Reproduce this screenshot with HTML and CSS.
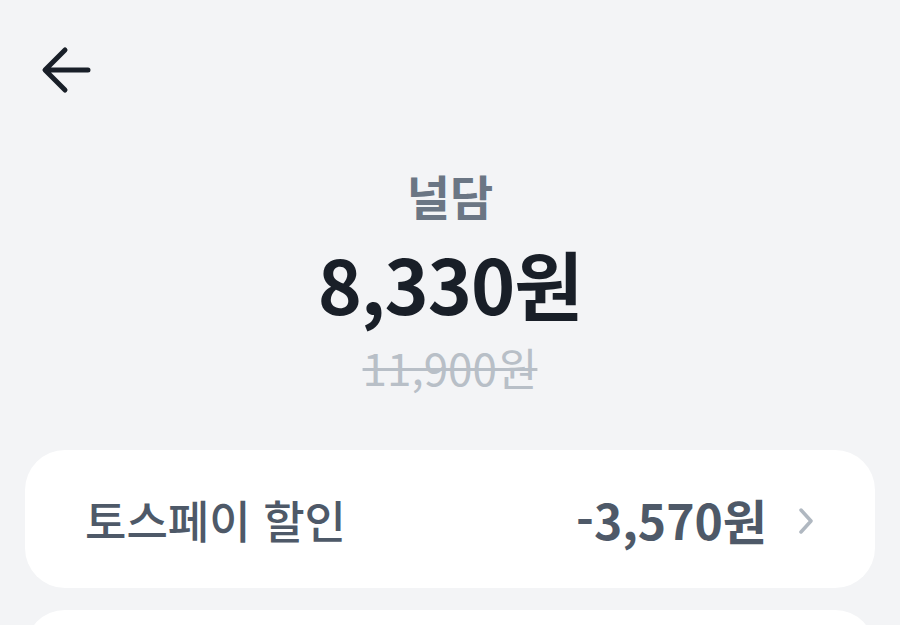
FILE: index.html
```html
<!DOCTYPE html>
<html lang="ko">
<head>
  <meta charset="UTF-8">
  <meta name="viewport" content="width=device-width, initial-scale=1.0">
  <title>결제</title>
  <link rel="stylesheet" href="styles.css">
</head>
<body>

  <div class="page">
    <!-- Top bar with back button -->
    <header class="top-bar">
      <button class="back-button" aria-label="뒤로">
        <svg width="52" height="48" viewBox="0 0 52 48" fill="none">
          <path d="M48 24H6M25 4L5 24L25 44" stroke="#191f28" stroke-width="5" stroke-linecap="round" stroke-linejoin="round"/>
        </svg>
      </button>
    </header>

    <!-- Store name and price summary -->
    <section class="summary">
      <p class="store-name">널담</p>
      <p class="final-price">8,330원</p>
      <p class="original-price">11,900원</p>
    </section>

    <!-- Discount rows -->
    <div class="card">
      <span class="row-label">토스페이 할인</span>
      <span class="row-value">-3,570원</span>
      <svg class="chevron" width="18" height="28" viewBox="0 0 18 28" fill="none">
        <path d="M4 3L14 14L4 25" stroke="#b0b8c1" stroke-width="3.5" stroke-linecap="round" stroke-linejoin="round"/>
      </svg>
    </div>
    <div class="card"></div>
  </div>

</body>
</html>
```

FILE: styles.css
```css
body {
  margin: 0;
  background-color: #f3f4f6;
  font-family: "Noto Sans CJK KR", "Noto Sans", sans-serif;
  color: #191f28;
}

.page {
  padding: 0 25px;
}

.top-bar {
  height: 120px;
  display: flex;
  align-items: flex-start;
  padding-top: 46px;
  box-sizing: border-box;
}

.back-button {
  background: none;
  border: none;
  padding: 0;
  margin-left: 15px;
  cursor: pointer;
}

.summary {
  display: flex;
  flex-direction: column;
  align-items: center;
  padding-top: 45px;
}

.summary p {
  margin: 0;
}

.store-name {
  font-size: 47px;
  font-weight: 700;
  color: #6b7684;
  line-height: 60px;
}

.final-price {
  font-size: 75px;
  font-weight: 700;
  line-height: 100px;
  margin-top: 8px !important;
  letter-spacing: -1px;
}

.original-price {
  font-size: 44px;
  font-weight: 400;
  color: #b8bfc7;
  line-height: 60px;
  margin-top: 4px !important;
  text-decoration: line-through;
  text-decoration-thickness: 3px;
}

.card {
  background-color: #fff;
  border-radius: 40px;
  height: 138px;
  display: flex;
  align-items: center;
  padding: 0 60px 0 60px;
  margin-top: 53px;
}

.card + .card {
  margin-top: 22px;
}

.row-label {
  flex: 1;
  font-size: 45px;
  font-weight: 500;
  color: #4e5968;
}

.row-value {
  font-size: 48px;
  font-weight: 700;
  color: #4e5968;
  margin-right: 30px;
}

.chevron {
  margin-top: 4px;
}
```
